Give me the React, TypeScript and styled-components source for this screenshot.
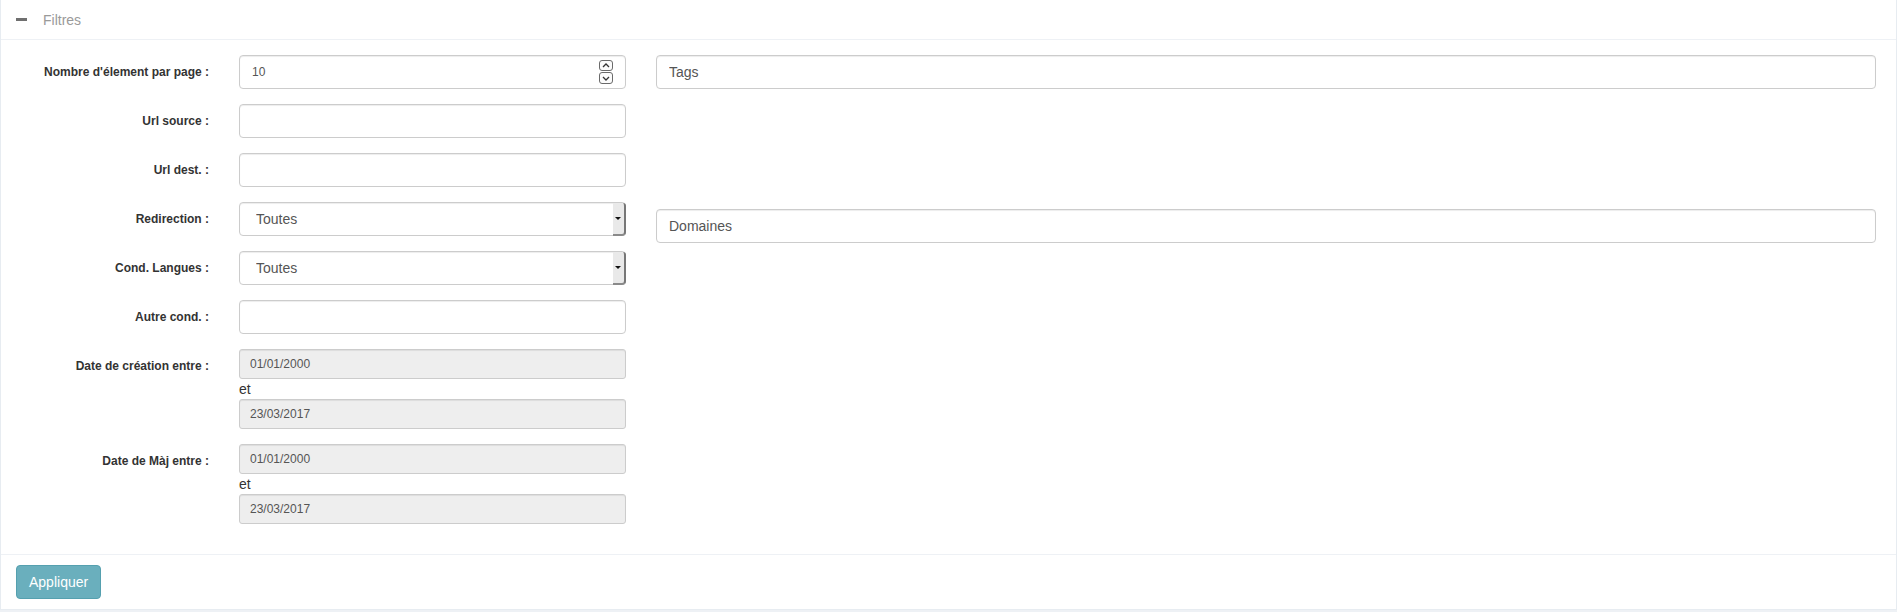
import React from 'react';
import styled, { createGlobalStyle } from 'styled-components';

const GlobalStyle = createGlobalStyle`
  html, body { margin: 0; padding: 0; background: #eef1f5; }
  body {
    font-family: "Liberation Sans", Arial, Helvetica, sans-serif;
    font-size: 14px;
    line-height: 1.42857;
    color: #333;
  }
  *, *::before, *::after { box-sizing: border-box; }
`;

const Panel = styled.section`
  width: 1897px;
  background: #fff;
  border-left: 1px solid #e7ecf1;
  border-right: 1px solid #e7ecf1;
  border-bottom: 1px solid #e7ecf1;
`;

const Header = styled.div`
  height: 40px;
  display: flex;
  align-items: center;
  gap: 16px;
  padding: 0 15px;
  border-bottom: 1px solid #eef1f5;
`;

const MinusIcon = styled.span`
  display: block;
  width: 11px;
  height: 3px;
  background: #6f6f6f;
`;

const Title = styled.span`
  font-size: 14px;
  color: #9a9a9a;
  line-height: 20px;
`;

const Body = styled.div`
  display: grid;
  grid-template-columns: 625px 1fr;
  padding: 15px 5px 15px 15px;
`;

const LeftCol = styled.div`
  display: flex;
  flex-direction: column;
`;

const RightCol = styled.div`
  display: flex;
  flex-direction: column;
  padding: 0 15px;
`;

const FormGroup = styled.div`
  display: grid;
  grid-template-columns: 208px 1fr;
  margin-bottom: 15px;
`;

const Label = styled.label`
  padding: 7px 15px 0 15px;
  text-align: right;
  font-size: 12px;
  font-weight: bold;
  line-height: 20px;
  color: #333;
`;

const Field = styled.div`
  padding: 0 15px;
  display: flex;
  flex-direction: column;
`;

const Input = styled.input<{ $small?: boolean; $readOnlyLook?: boolean }>`
  display: block;
  width: 100%;
  height: ${p => (p.$small ? '30px' : '34px')};
  padding: ${p => (p.$small ? '5px 10px' : '6px 12px')};
  font-family: inherit;
  font-size: ${p => (p.$small ? '12px' : '14px')};
  line-height: ${p => (p.$small ? '1.5' : '1.42857')};
  color: #555;
  background: ${p => (p.$readOnlyLook ? '#eeeeee' : '#fff')};
  border: 1px solid #ccc;
  border-radius: ${p => (p.$small ? '3px' : '4px')};
  box-shadow: inset 0 1px 1px rgba(0, 0, 0, 0.075);
  outline: none;
  &::placeholder { color: #555; opacity: 1; }
  &::-webkit-outer-spin-button,
  &::-webkit-inner-spin-button { -webkit-appearance: none; margin: 0; }
  -moz-appearance: textfield;
`;

const NumberWrap = styled.div`
  position: relative;
`;

const NumberInput = styled(Input)`
  font-size: 12px;
`;

const Spinner = styled.div`
  position: absolute;
  right: 13px;
  top: 5px;
  width: 14px;
  display: flex;
  flex-direction: column;
  gap: 1px;
`;

const SpinBox = styled.div<{ $h: number }>`
  height: ${p => p.$h}px;
  border: 1px solid #6a6a6a;
  border-radius: 3px;
  background: #fbfbfb;
  display: flex;
  align-items: center;
  justify-content: center;
`;

const SelectWrap = styled.div`
  position: relative;
  &::after {
    content: '';
    position: absolute;
    right: 0;
    top: 1px;
    bottom: 0;
    width: 13px;
    background: #e9e9e9;
    border-right: 2px solid #777;
    border-bottom: 2px solid #8a8a8a;
    border-radius: 0 3px 4px 0;
    pointer-events: none;
  }
  &::before {
    content: '';
    position: absolute;
    right: 5px;
    top: 15px;
    width: 0;
    height: 0;
    border-left: 3px solid transparent;
    border-right: 3px solid transparent;
    border-top: 3px solid #111;
    z-index: 1;
    pointer-events: none;
  }
`;

const Select = styled.select`
  display: block;
  width: 100%;
  height: 34px;
  padding: 6px 12px 6px 16px;
  font-family: inherit;
  font-size: 14px;
  color: #555;
  background: #fff;
  border: 1px solid #ccc;
  border-radius: 4px;
  box-shadow: inset 0 1px 1px rgba(0, 0, 0, 0.075);
  appearance: none;
  -webkit-appearance: none;
  outline: none;
`;

const Between = styled.div`
  font-size: 14px;
  line-height: 20px;
  color: #333;
`;

const Spacer = styled.div<{ $h: number }>`
  height: ${p => p.$h}px;
`;

const Footer = styled.div`
  border-top: 1px solid #eef1f5;
  padding: 10px 15px;
`;

const Button = styled.button`
  height: 34px;
  padding: 6px 12px;
  font-family: inherit;
  font-size: 14px;
  line-height: 20px;
  color: #fff;
  background: #6aafbd;
  border: 1px solid #55a0af;
  border-radius: 4px;
  cursor: pointer;
`;

const Chevron = ({ up }: { up?: boolean }) => (
  <svg width="8" height="5" viewBox="0 0 8 5">
    <path
      d={up ? 'M1 4 L4 1 L7 4' : 'M1 1 L4 4 L7 1'}
      fill="none"
      stroke="#333"
      strokeWidth="1.3"
    />
  </svg>
);

const TextRow = ({ label }: { label: string }) => (
  <FormGroup>
    <Label>{label}</Label>
    <Field>
      <Input type="text" />
    </Field>
  </FormGroup>
);

const SelectRow = ({ label }: { label: string }) => (
  <FormGroup>
    <Label>{label}</Label>
    <Field>
      <SelectWrap>
        <Select defaultValue="all">
          <option value="all">Toutes</option>
        </Select>
      </SelectWrap>
    </Field>
  </FormGroup>
);

const DateRow = ({ label }: { label: string }) => (
  <FormGroup>
    <Label>{label}</Label>
    <Field>
      <Input $small $readOnlyLook type="text" defaultValue="01/01/2000" readOnly />
      <Between>et</Between>
      <Input $small $readOnlyLook type="text" defaultValue="23/03/2017" readOnly />
    </Field>
  </FormGroup>
);

export default function App() {
  return (
    <>
      <GlobalStyle />
      <Panel>
        <Header>
          <MinusIcon />
          <Title>Filtres</Title>
        </Header>
        <Body>
          <LeftCol>
            <FormGroup>
              <Label>Nombre d'élement par page :</Label>
              <Field>
                <NumberWrap>
                  <NumberInput type="number" defaultValue={10} />
                  <Spinner>
                    <SpinBox $h={11}>
                      <Chevron up />
                    </SpinBox>
                    <SpinBox $h={12}>
                      <Chevron />
                    </SpinBox>
                  </Spinner>
                </NumberWrap>
              </Field>
            </FormGroup>
            <TextRow label="Url source :" />
            <TextRow label="Url dest. :" />
            <SelectRow label="Redirection :" />
            <SelectRow label="Cond. Langues :" />
            <TextRow label="Autre cond. :" />
            <DateRow label="Date de création entre :" />
            <DateRow label="Date de Màj entre :" />
          </LeftCol>
          <RightCol>
            <Input type="text" placeholder="Tags" />
            <Spacer $h={120} />
            <Input type="text" placeholder="Domaines" />
          </RightCol>
        </Body>
        <Footer>
          <Button type="button">Appliquer</Button>
        </Footer>
      </Panel>
    </>
  );
}
